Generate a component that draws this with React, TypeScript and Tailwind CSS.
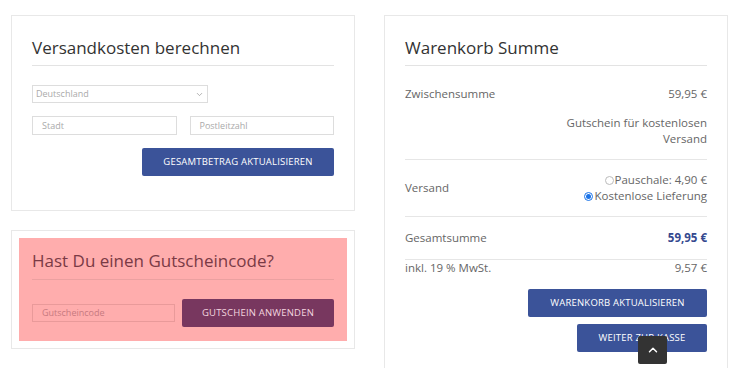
import { ChevronDown, ChevronUp } from 'lucide-react';

const font = { fontFamily: '"Open Sans", "Liberation Sans", sans-serif' };

export default function App() {
  return (
    <div className="relative h-[368px] w-[740px] overflow-hidden bg-white" style={font}>
      <div className="flex gap-[29px] pl-[11px] pt-[15px]">
        {/* left column */}
        <div className="flex w-[344px] flex-col gap-[19px]">
          <div className="border border-[#e8e8e8] px-[20px] pb-[34px] pt-[21px]">
            <h2 className="text-[17px] leading-[22px] text-[#333]">Versandkosten berechnen</h2>
            <div className="mt-[6px] border-b border-[#e3e3e3]" />
            <div className="mt-[19px] flex h-[18px] w-[176px] items-center justify-between border border-[#ddd] px-[3px] text-[9px] text-[#aaa]">
              <span>Deutschland</span>
              <ChevronDown size={9} className="text-[#999]" />
            </div>
            <div className="mt-[13px] flex gap-[13px]">
              <div className="flex h-[19px] flex-1 items-center border border-[#ddd] px-[9px] text-[9px] text-[#aaa]">Stadt</div>
              <div className="flex h-[19px] flex-1 items-center border border-[#ddd] px-[9px] text-[9px] text-[#aaa]">Postleitzahl</div>
            </div>
            <div className="mt-[13px] flex justify-end">
              <button className="h-[28px] w-[192px] rounded-[2px] bg-[#3b5399] text-[9.5px] tracking-[0.2px] text-white">
                GESAMTBETRAG AKTUALISIEREN
              </button>
            </div>
          </div>

          <div className="border border-[#e8e8e8] p-[7px]">
            <div className="bg-[#ffadad] px-[13px] pb-[14px] pt-[12px]">
              <h2 className="text-[17px] leading-[22px] text-[#7a3a45]">Hast Du einen Gutscheincode?</h2>
              <div className="mt-[7px] border-b border-[#eba0a0]" />
              <div className="mt-[19px] flex items-center gap-[7px]">
                <div className="flex h-[18px] w-[143px] items-center border border-[#e99a9a] px-[9px] text-[9px] text-[#c77a80]">Gutscheincode</div>
                <button className="h-[28px] flex-1 rounded-[2px] bg-[#78375f] text-[9.5px] tracking-[0.2px] text-[#f3d5df]">
                  GUTSCHEIN ANWENDEN
                </button>
              </div>
            </div>
          </div>
        </div>

        {/* right column */}
        <div className="w-[344px] border border-[#e8e8e8] px-[20px] pb-[20px] pt-[21px]">
          <h2 className="text-[17px] leading-[22px] text-[#333]">Warenkorb Summe</h2>
          <div className="mt-[6px] border-b border-[#e3e3e3]" />
          <div className="flex items-center justify-between pt-[20px] text-[11.5px] leading-[16px] text-[#666]">
            <span>Zwischensumme</span>
            <span>59,95 €</span>
          </div>
          <div className="mt-[13px] border-b border-[#e6e6e6] pb-[12px] text-right text-[11.5px] leading-[16px] text-[#666]">
            Gutschein für kostenlosen
            <br />
            Versand
          </div>
          <div className="flex h-[57px] items-center justify-between border-b border-[#e6e6e6] text-[11.5px] text-[#666]">
            <span>Versand</span>
            <div className="flex flex-col items-end leading-[16px]">
              <span className="flex items-center gap-[1px]">
                <span className="inline-block h-[9px] w-[9px] rounded-full border border-[#bbb]" />
                Pauschale: 4,90 €
              </span>
              <span className="flex items-center gap-[1px]">
                <span className="flex h-[9px] w-[9px] items-center justify-center rounded-full border border-[#1a73e8]">
                  <span className="h-[5px] w-[5px] rounded-full bg-[#1a73e8]" />
                </span>
                Kostenlose Lieferung
              </span>
            </div>
          </div>
          <div className="flex h-[43px] items-center justify-between border-b border-[#e6e6e6] text-[11.5px]">
            <span className="text-[#666]">Gesamtsumme</span>
            <span className="font-bold text-[#35498f]">59,95 €</span>
          </div>
          <div className="flex items-center justify-between text-[11.5px] leading-[16px] text-[#666]">
            <span>inkl. 19 % MwSt.</span>
            <span>9,57 €</span>
          </div>
          <div className="mt-[13px] flex flex-col items-end gap-[7px]">
            <button className="h-[28px] w-[179px] rounded-[2px] bg-[#3b5399] text-[9.5px] tracking-[0.2px] text-white">
              WARENKORB AKTUALISIEREN
            </button>
            <button className="h-[28px] w-[130px] rounded-[2px] bg-[#3b5399] text-[9.5px] tracking-[0.2px] text-white">
              WEITER ZUR KASSE
            </button>
          </div>
        </div>
      </div>

      {/* scroll to top */}
      <div className="absolute left-[638px] top-[336px] flex h-[28px] w-[29px] items-center justify-center rounded-[2px] bg-[#333]">
        <ChevronUp size={14} className="text-white" strokeWidth={2.5} />
      </div>
    </div>
  );
}
